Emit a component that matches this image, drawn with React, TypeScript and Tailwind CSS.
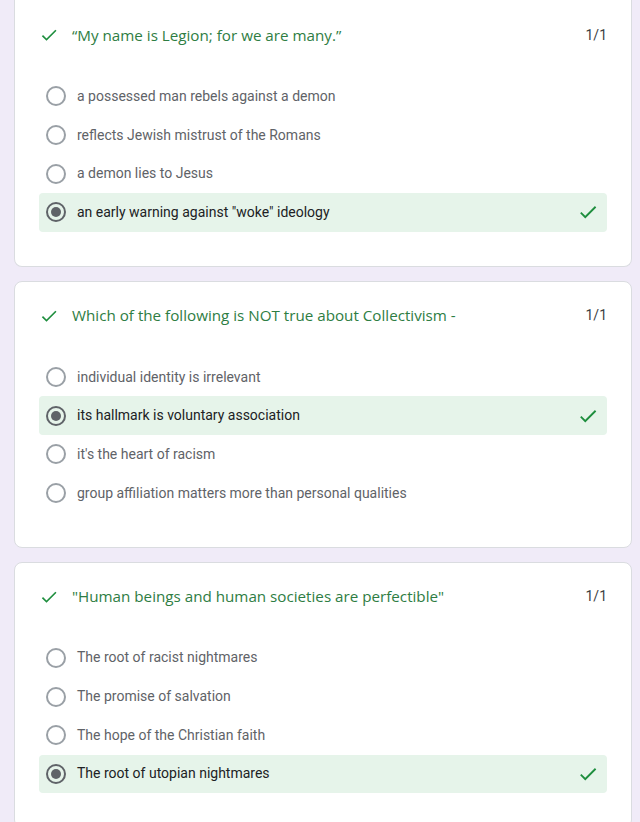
import React from 'react'

type Question = {
  title: string
  options: string[]
  answer: number
}

const questions: Question[] = [
  {
    title: '“My name is Legion; for we are many.”',
    options: [
      'a possessed man rebels against a demon',
      'reflects Jewish mistrust of the Romans',
      'a demon lies to Jesus',
      'an early warning against "woke" ideology',
    ],
    answer: 3,
  },
  {
    title: 'Which of the following is NOT true about Collectivism -',
    options: [
      'individual identity is irrelevant',
      'its hallmark is voluntary association',
      "it's the heart of racism",
      'group affiliation matters more than personal qualities',
    ],
    answer: 1,
  },
  {
    title: '"Human beings and human societies are perfectible"',
    options: [
      'The root of racist nightmares',
      'The promise of salvation',
      'The hope of the Christian faith',
      'The root of utopian nightmares',
    ],
    answer: 3,
  },
]

function Check({ className }: { className?: string }) {
  return (
    <svg viewBox="0 0 24 24" className={className} fill="currentColor">
      <path d="M9 16.17L4.83 12l-1.42 1.41L9 19 21 7l-1.41-1.41z" />
    </svg>
  )
}

function Radio({ checked }: { checked: boolean }) {
  if (checked) {
    return (
      <span className="flex h-[20px] w-[20px] shrink-0 items-center justify-center rounded-full border-2 border-[#5f6368]">
        <span className="h-[10px] w-[10px] rounded-full bg-[#5f6368]" />
      </span>
    )
  }
  return <span className="h-[20px] w-[20px] shrink-0 rounded-full border-2 border-[#9aa0a6]" />
}

function QuestionCard({ q, first }: { q: Question; first?: boolean }) {
  return (
    <div
      className={`ml-[14px] mr-[8px] rounded-lg border border-[#dadce0] bg-white pl-[24px] pr-[24px] pb-[34px] ${
        first ? 'rounded-t-none border-t-0 pt-[25px]' : 'pt-[24px]'
      }`}
    >
      <div className="flex h-[20px] items-center">
        <Check className="h-[20px] w-[20px] text-[#1e8e3e]" />
        <span className="ml-[13px] flex-1 text-[15.2px] text-[#2e7d43] [font-family:'Open_Sans',sans-serif]">
          {q.title}
        </span>
        <span className="text-[14px] text-[#3c4043] [font-family:Roboto,sans-serif]">1/1</span>
      </div>
      <div className="mt-[32px] flex flex-col">
        {q.options.map((opt, i) => {
          const selected = i === q.answer
          return (
            <div
              key={opt}
              className={`flex h-[38.7px] items-center rounded pl-[7px] pr-[8px] ${
                selected ? 'bg-[#e6f4ea]' : ''
              }`}
            >
              <Radio checked={selected} />
              <span
                className={`ml-[11px] flex-1 text-[14px] [font-family:Roboto,sans-serif] ${
                  selected ? 'text-[#202124]' : 'text-[#5f6368]'
                }`}
              >
                {opt}
              </span>
              {selected && <Check className="h-[22px] w-[22px] text-[#1e8e3e]" />}
            </div>
          )
        })}
      </div>
    </div>
  )
}

export default function App() {
  return (
    <div className="flex h-[822px] flex-col gap-[14px] overflow-hidden bg-[#f0ebf8]">
      {questions.map((q, i) => (
        <QuestionCard key={q.title} q={q} first={i === 0} />
      ))}
    </div>
  )
}
